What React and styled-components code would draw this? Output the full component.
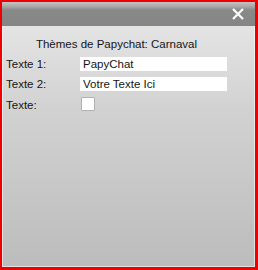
import React from "react";
import styled, { createGlobalStyle } from "styled-components";

const Global = createGlobalStyle`
  html, body { margin: 0; padding: 0; background: #fff; }
  body { font-family: "Liberation Sans", Arial, sans-serif; }
`;

const Frame = styled.div`
  box-sizing: border-box;
  width: 258px;
  height: 270px;
  border-style: solid;
  border-color: #ee0000;
  border-width: 2px 3px 3px 2px;
  display: flex;
  flex-direction: column;
  background: linear-gradient(to bottom, #e9e9e9 0%, #d2d2d2 40%, #bcbcbc 100%);
`;

const Header = styled.div`
  height: 24px;
  flex: none;
  display: flex;
  justify-content: flex-end;
  align-items: center;
  padding-right: 10px;
  background: linear-gradient(to bottom, #c4c4c4 0px, #a4a4a4 5px, #898989 8px, #858585 24px);
`;

const Close = styled.button`
  border: 0;
  padding: 0;
  margin: 0;
  background: none;
  width: 14px;
  height: 14px;
  display: flex;
  cursor: pointer;
`;

const Body = styled.div`
  flex: 1;
  box-sizing: border-box;
  border: 1px solid rgba(255, 255, 255, 0.55);
  border-top: 0;
  padding: 11px 0 0 3px;
`;

const Grid = styled.div`
  display: grid;
  grid-template-columns: 74px 147px;
  row-gap: 6px;
  align-items: center;
  font-size: 11.5px;
  color: #151515;
`;

const Title = styled.div`
  grid-column: 1 / span 2;
  text-align: center;
  line-height: 14px;
`;

const Label = styled.label`
  line-height: 14px;
`;

const Field = styled.input`
  box-sizing: border-box;
  width: 147px;
  height: 14px;
  border: 0;
  margin: 0;
  padding: 0 3px;
  background: #fff;
  font-family: "Liberation Sans", Arial, sans-serif;
  font-size: 11.5px;
  color: #151515;
  outline: none;
`;

const Check = styled.input`
  appearance: none;
  box-sizing: border-box;
  width: 14px;
  height: 14px;
  margin: 0 0 0 1px;
  background: #fff;
  border: 1px solid #b0b0b0;
  border-radius: 1px;
`;

export default function App() {
  return (
    <>
      <Global />
      <Frame>
        <Header>
          <Close aria-label="Fermer">
            <svg width="14" height="14" viewBox="0 0 14 14">
              <path d="M2 2 L12 12 M12 2 L2 12" stroke="#fff" strokeWidth="2.2" strokeLinecap="butt" />
            </svg>
          </Close>
        </Header>
        <Body>
          <Grid>
            <Title>Thèmes de Papychat: Carnaval</Title>
            <Label>Texte 1:</Label>
            <Field defaultValue="PapyChat" />
            <Label>Texte 2:</Label>
            <Field defaultValue="Votre Texte Ici" />
            <Label>Texte:</Label>
            <div><Check type="checkbox" /></div>
          </Grid>
        </Body>
      </Frame>
    </>
  );
}
